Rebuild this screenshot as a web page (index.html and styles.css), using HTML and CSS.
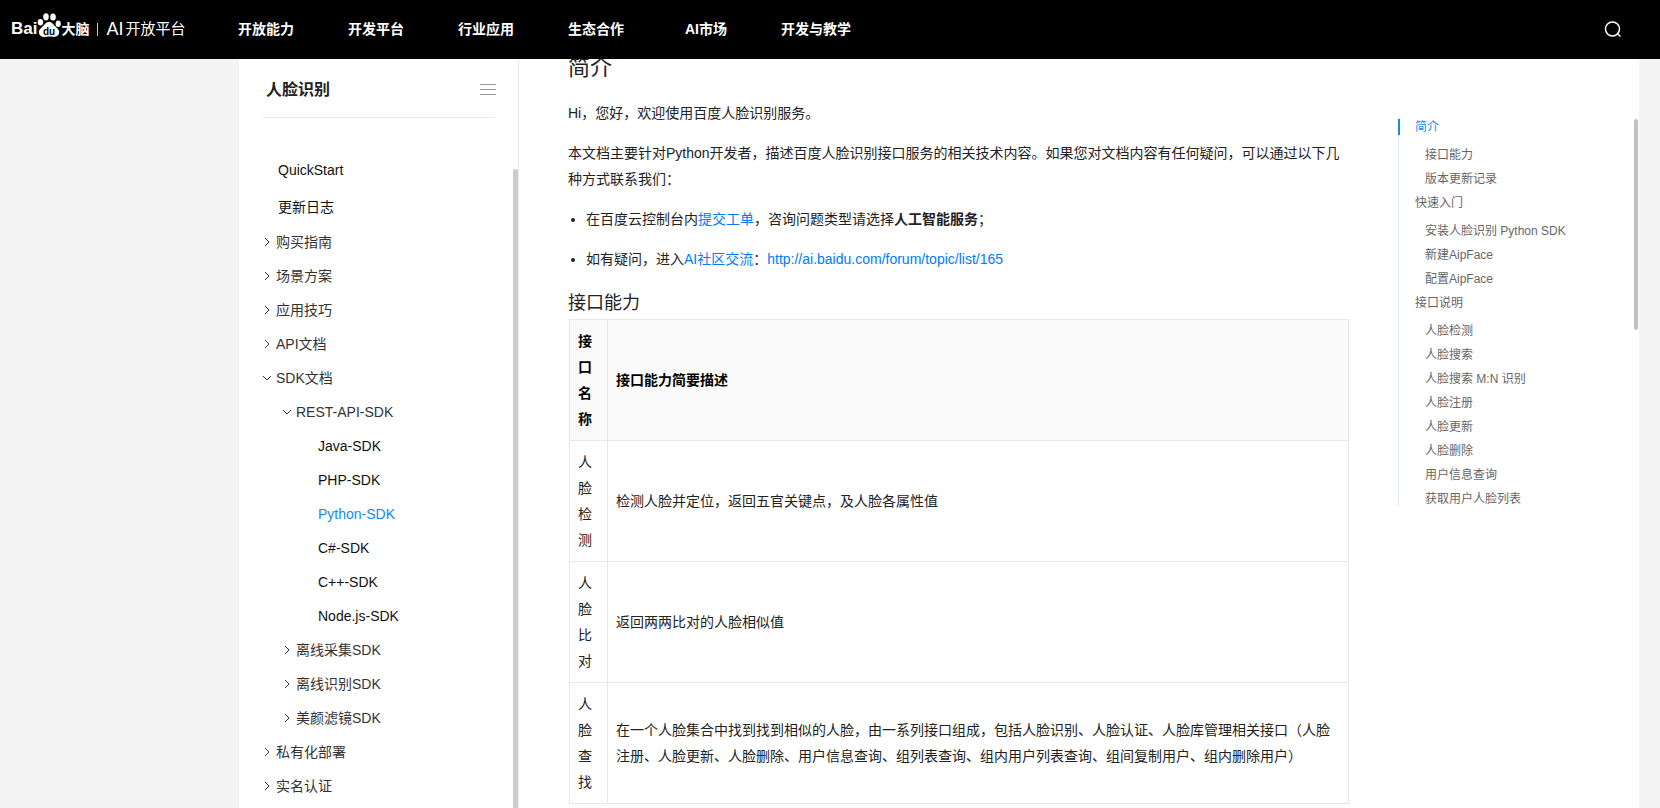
FILE: index.html
```html
<!DOCTYPE html>
<html lang="zh-CN">
<head>
<meta charset="utf-8">
<title>人脸识别 - Python-SDK</title>
<link rel="stylesheet" href="styles.css">
</head>
<body>
<header class="header">
  <a class="logo" href="#">
    <span class="logo-bai">Bai</span>
    <svg class="logo-paw" viewBox="0 0 24 25" width="24" height="25" aria-hidden="true">
      <g fill="#fff">
        <ellipse cx="3.400" cy="9.200" rx="2.700" ry="3.200"/>
        <ellipse cx="9" cy="3.800" rx="2.800" ry="3.600"/>
        <ellipse cx="16" cy="4" rx="2.800" ry="3.500"/>
        <ellipse cx="21.200" cy="10.800" rx="2.600" ry="3.200"/>
        <path d="M12 8.800c2.800 0 4 2.400 5.800 4.200 2.200 2 4.600 3.600 4.400 6.600-.3 3.200-2.800 4.400-5.400 4.300-1.800-.1-3-.4-4.800-.4s-2.800.4-4.800.4c-2.800 0-5.100-1.300-5.300-4.400-.2-3 2.200-4.500 4.300-6.500C8 11.200 9.200 8.800 12 8.800z"/>
      </g>
      <text class="logo-du" x="12" y="22" text-anchor="middle">du</text>
    </svg>
    <span class="logo-brain">大脑</span>
    <span class="logo-line"></span>
    <span class="logo-ai">AI</span>
    <span class="logo-open">开放平台</span>
  </a>
  <nav class="nav">
    <a href="#">开放能力</a>
    <a href="#">开发平台</a>
    <a href="#">行业应用</a>
    <a href="#">生态合作</a>
    <a href="#">AI市场</a>
    <a href="#">开发与教学</a>
  </nav>
  <button class="search" aria-label="搜索">
    <svg viewBox="0 0 18 18" width="18" height="18" fill="none" stroke="#fff" stroke-width="1.500"><circle cx="8.500" cy="9" r="7"/><path d="M13 13l3.500 3.500"/></svg>
  </button>
</header>

<div class="page">
  <aside class="sidebar">
    <div class="side-head">
      <h2>人脸识别</h2>
      <button class="menu" aria-label="收起目录"><i></i><i></i><i></i></button>
    </div>
    <div class="side-body">
      <ul class="tree">
        <li class="top"><a href="#">QuickStart</a></li>
        <li class="top"><a href="#">更新日志</a></li>
        <li class="group"><svg class="arrow" viewBox="0 0 10 10"><path d="M3 1l4 4-4 4"/></svg><a href="#">购买指南</a></li>
        <li class="group"><svg class="arrow" viewBox="0 0 10 10"><path d="M3 1l4 4-4 4"/></svg><a href="#">场景方案</a></li>
        <li class="group"><svg class="arrow" viewBox="0 0 10 10"><path d="M3 1l4 4-4 4"/></svg><a href="#">应用技巧</a></li>
        <li class="group"><svg class="arrow" viewBox="0 0 10 10"><path d="M3 1l4 4-4 4"/></svg><a href="#">API文档</a></li>
        <li class="group"><svg class="arrow" viewBox="0 0 10 10"><path d="M1 3l4 4 4-4"/></svg><a href="#">SDK文档</a></li>
        <li class="group sub"><svg class="arrow" viewBox="0 0 10 10"><path d="M1 3l4 4 4-4"/></svg><a href="#">REST-API-SDK</a></li>
        <li class="leaf"><a href="#">Java-SDK</a></li>
        <li class="leaf"><a href="#">PHP-SDK</a></li>
        <li class="leaf current"><a href="#">Python-SDK</a></li>
        <li class="leaf"><a href="#">C#-SDK</a></li>
        <li class="leaf"><a href="#">C++-SDK</a></li>
        <li class="leaf"><a href="#">Node.js-SDK</a></li>
        <li class="group sub"><svg class="arrow" viewBox="0 0 10 10"><path d="M3 1l4 4-4 4"/></svg><a href="#">离线采集SDK</a></li>
        <li class="group sub"><svg class="arrow" viewBox="0 0 10 10"><path d="M3 1l4 4-4 4"/></svg><a href="#">离线识别SDK</a></li>
        <li class="group sub"><svg class="arrow" viewBox="0 0 10 10"><path d="M3 1l4 4-4 4"/></svg><a href="#">美颜滤镜SDK</a></li>
        <li class="group"><svg class="arrow" viewBox="0 0 10 10"><path d="M3 1l4 4-4 4"/></svg><a href="#">私有化部署</a></li>
        <li class="group"><svg class="arrow" viewBox="0 0 10 10"><path d="M3 1l4 4-4 4"/></svg><a href="#">实名认证</a></li>
      </ul>
      <div class="side-scroll"></div>
    </div>
  </aside>

  <main class="content">
    <h1>简介</h1>
    <p>Hi，您好，欢迎使用百度人脸识别服务。</p>
    <p>本文档主要针对Python开发者，描述百度人脸识别接口服务的相关技术内容。如果您对文档内容有任何疑问，可以通过以下几种方式联系我们：</p>
    <ul>
      <li>在百度云控制台内<a href="#">提交工单</a>，咨询问题类型请选择<strong>人工智能服务</strong>；</li>
      <li>如有疑问，进入<a href="#">AI社区交流</a>：<a href="#">http://ai.baidu.com/forum/topic/list/165</a></li>
    </ul>
    <h2>接口能力</h2>
    <table>
      <thead>
        <tr><th class="name">接口名称</th><th>接口能力简要描述</th></tr>
      </thead>
      <tbody>
        <tr><td>人脸检测</td><td>检测人脸并定位，返回五官关键点，及人脸各属性值</td></tr>
        <tr><td>人脸比对</td><td>返回两两比对的人脸相似值</td></tr>
        <tr><td>人脸查找</td><td>在一个人脸集合中找到找到相似的人脸，由一系列接口组成，包括人脸识别、人脸认证、人脸库管理相关接口（人脸注册、人脸更新、人脸删除、用户信息查询、组列表查询、组内用户列表查询、组间复制用户、组内删除用户）</td></tr>
      </tbody>
    </table>
  </main>

  <aside class="toc">
    <ul>
      <li class="section active"><a href="#">简介</a></li>
      <li><a href="#">接口能力</a></li>
      <li><a href="#">版本更新记录</a></li>
      <li class="section"><a href="#">快速入门</a></li>
      <li><a href="#">安装人脸识别 Python SDK</a></li>
      <li><a href="#">新建AipFace</a></li>
      <li><a href="#">配置AipFace</a></li>
      <li class="section"><a href="#">接口说明</a></li>
      <li><a href="#">人脸检测</a></li>
      <li><a href="#">人脸搜索</a></li>
      <li><a href="#">人脸搜索 M:N 识别</a></li>
      <li><a href="#">人脸注册</a></li>
      <li><a href="#">人脸更新</a></li>
      <li><a href="#">人脸删除</a></li>
      <li><a href="#">用户信息查询</a></li>
      <li><a href="#">获取用户人脸列表</a></li>
    </ul>
    <div class="toc-scroll"></div>
  </aside>
</div>
</body>
</html>
```
FILE: styles.css
```css
* { box-sizing: border-box; }
body {
  margin: 0;
  height: 100vh;
  display: flex;
  flex-direction: column;
  overflow: hidden;
  background: #f4f4f4;
  color: #222;
  font: 14px/26px "Liberation Sans", "Noto Sans CJK SC", sans-serif;
}
a { color: inherit; text-decoration: none; }
ul { margin: 0; padding: 0; list-style: none; }
button { border: 0; padding: 0; background: none; cursor: pointer; }

.header {
  position: relative;
  z-index: 1;
  flex: none;
  height: 59px;
  display: flex;
  align-items: center;
  padding: 0 38px 2px 11px;
  background: #000;
  color: #fff;
}
.logo {
  width: 200px;
  height: 25px;
  margin-bottom: 6px;
  display: flex;
  align-items: flex-end;
  line-height: 18px;
  white-space: nowrap;
}
.logo-bai { font-size: 17px; font-weight: bold; }
.logo-paw { flex: none; align-self: flex-start; }
.logo-du { font: bold 10px "Liberation Sans", sans-serif; }
.logo-brain { font-size: 14px; font-weight: bold; }
.logo-line { width: 1px; height: 13px; margin: 0 8px 2px; background: #ccc; }
.logo-ai { font-size: 18px; margin-right: 2px; }
.logo-open { font-size: 15px; }
.nav { display: flex; flex: 1; }
.nav a { width: 110px; text-align: center; font-weight: bold; }
.search { display: flex; }

.page {
  flex: 1;
  min-height: 0;
  display: flex;
  margin: 0 21px 0 239px;
  background: #fff;
}

.sidebar {
  flex: none;
  width: 280px;
  display: flex;
  flex-direction: column;
  border-right: 1px solid #e6e9f2;
}
.side-head {
  flex: none;
  height: 59px;
  display: flex;
  align-items: center;
  justify-content: space-between;
  margin: 0 24px;
  padding: 3px 0 0 3px;
  border-bottom: 1px solid #e8e9ef;
}
.side-head h2 { margin: 0; font-size: 16px; }
.menu { width: 16px; display: grid; gap: 4px; margin-right: -2px; }
.menu i { height: 1px; background: #999; }
.side-body { flex: 1; min-height: 0; display: flex; margin-top: 33px; }
.tree { flex: 1; padding-left: 23px; color: #333; }
.tree li { height: 34px; display: flex; align-items: center; }
.tree .top { height: 37px; padding-left: 16px; color: #111; }
.arrow { flex: none; width: 10px; height: 10px; margin-right: 4px; fill: none; stroke: #333; }
.tree .sub { padding-left: 20px; }
.tree .leaf { padding-left: 56px; color: #111; }
.tree .current { color: #108cee; }
.side-scroll { width: 5px; margin-top: 18px; border-radius: 2px 2px 0 0; background: #ccc; }

.content { flex: 1; min-width: 0; padding: 0 49px; }
.content h1 { margin: -7px 0 16px; font-size: 22px; font-weight: normal; line-height: 32px; }
.content p { margin: 0 0 14px; }
.content ul { padding-left: 18px; list-style: disc; }
.content li { margin-bottom: 14px; }
.content a { color: #007bff; }
.content h2 { margin: 18px 0 3px; font-size: 18px; font-weight: normal; }
.content table { width: calc(100% - 1px); margin-left: 1px; table-layout: fixed; border-collapse: collapse; }
.content th, .content td { border: 1px solid #e8e8e8; padding: 8px; text-align: left; }
.content th { background: #fafafa; color: #000; }
.content .name { width: 38px; }

.toc {
  flex: none;
  width: 241px;
  display: flex;
  align-items: flex-start;
  justify-content: space-between;
  padding: 60px 1px 0 0;
  color: #666;
  font-size: 12px;
  line-height: 16px;
}
.toc ul { border-left: 1px solid #e3ebf3; }
.toc li { margin-bottom: 8px; padding-left: 26px; }
.toc li:last-child { margin-bottom: 0; }
.toc .section { margin-bottom: 12px; padding-left: 16px; }
.toc .active { margin-left: -1px; padding-left: 15px; border-left: 2px solid #108cee; color: #108cee; }
.toc-scroll { width: 4px; height: 211px; border-radius: 2px; background: #c1c1c1; }
```
